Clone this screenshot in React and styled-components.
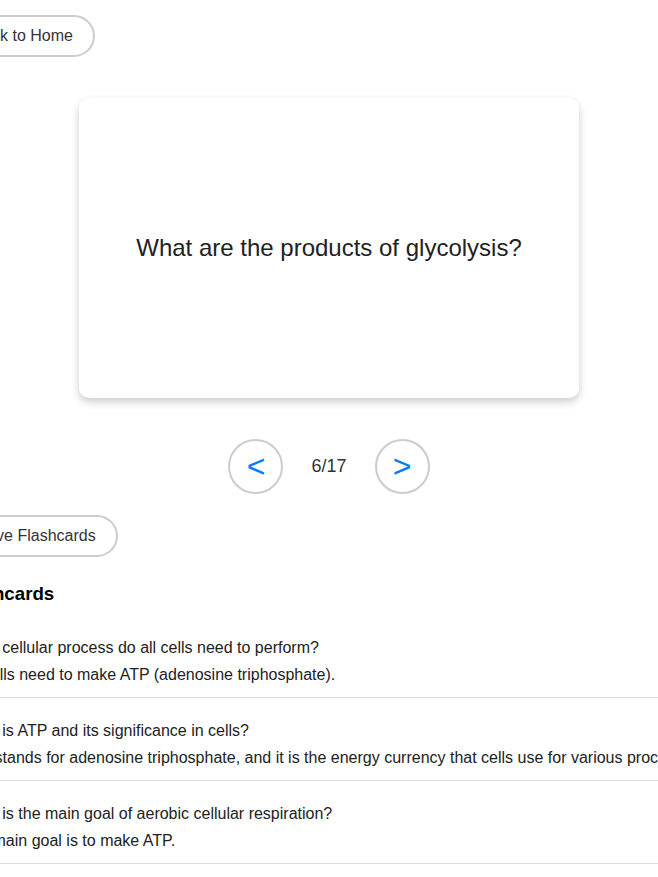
import React, { useState } from 'react';
import styled, { createGlobalStyle } from 'styled-components';

const GlobalStyle = createGlobalStyle`
  html, body {
    margin: 0;
    padding: 0;
    background: #fff;
    overflow-x: hidden;
  }
  body {
    font-family: "Liberation Sans", Arial, sans-serif;
    color: #333;
  }
`;

const Page = styled.div`
  display: flex;
  justify-content: center;
  padding-top: 15px;
`;

const Wrapper = styled.div`
  flex: 0 0 757px;
  width: 757px;
  display: flex;
  flex-direction: column;
`;

const PillButton = styled.button`
  align-self: flex-start;
  margin-top: ${props => props.$top || 0}px;
  margin-left: ${props => props.$left || 0}px;
  padding: 10px 20px;
  border: 2px solid #ccc;
  border-radius: 22px;
  background: #fff;
  color: #333;
  font-family: inherit;
  font-size: 16px;
  line-height: normal;
  cursor: pointer;
`;

const Card = styled.div`
  align-self: center;
  width: 500px;
  height: 300px;
  margin-top: 41px;
  box-sizing: border-box;
  display: flex;
  align-items: center;
  justify-content: center;
  padding: 20px;
  border-radius: 10px;
  background: #fff;
  box-shadow: 0 4px 8px rgba(0, 0, 0, 0.2);
  font-size: 24px;
  color: #222;
  text-align: center;
`;

const Nav = styled.div`
  margin-top: 41px;
  display: flex;
  justify-content: center;
  align-items: center;
  gap: 28px;
`;

const NavButton = styled.button`
  width: 55px;
  height: 55px;
  box-sizing: border-box;
  padding: 0;
  border: 2px solid #ccc;
  border-radius: 50%;
  background: #fff;
  color: #007bff;
  font-family: inherit;
  font-size: 32px;
  display: flex;
  align-items: center;
  justify-content: center;
  cursor: pointer;
`;

const Counter = styled.span`
  font-size: 18px;
  color: #333;
`;

const Heading = styled.h3`
  margin: 26px 0 10px;
  padding-left: 5px;
  font-size: 18.72px;
  font-weight: bold;
  color: #000;
`;

const List = styled.ul`
  list-style: none;
  margin: 0;
  padding: 0;
`;

const Item = styled.li`
  padding: 24px 10px 13px;
  border-bottom: 1px solid #ddd;
  white-space: nowrap;
  font-size: 16px;
  color: #222;
`;

const Question = styled.p`
  margin: 0 0 9px;
`;

const Answer = styled.p`
  margin: 0;
`;

const cards = [
  {
    q: 'What cellular process do all cells need to perform?',
    a: 'All cells need to make ATP (adenosine triphosphate).',
  },
  {
    q: 'What is ATP and its significance in cells?',
    a: 'ATP stands for adenosine triphosphate, and it is the energy currency that cells use for various processes.',
  },
  {
    q: 'What is the main goal of aerobic cellular respiration?',
    a: 'The main goal is to make ATP.',
  },
];

export default function App() {
  const [index, setIndex] = useState(5);
  const total = 17;

  return (
    <>
      <GlobalStyle />
      <Page>
        <Wrapper>
          <PillButton>Back to Home</PillButton>
          <Card>What are the products of glycolysis?</Card>
          <Nav>
            <NavButton onClick={() => setIndex(i => Math.max(0, i - 1))}>&lt;</NavButton>
            <Counter>{index + 1}/{total}</Counter>
            <NavButton onClick={() => setIndex(i => Math.min(total - 1, i + 1))}>&gt;</NavButton>
          </Nav>
          <PillButton $top={21} $left={4}>Save Flashcards</PillButton>
          <Heading>Flashcards</Heading>
          <List>
            {cards.map(card => (
              <Item key={card.q}>
                <Question>{card.q}</Question>
                <Answer>{card.a}</Answer>
              </Item>
            ))}
          </List>
        </Wrapper>
      </Page>
    </>
  );
}
